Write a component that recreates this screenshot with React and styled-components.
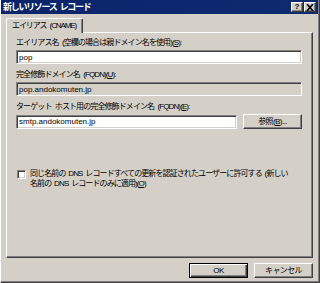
import React from "react";
import styled, { createGlobalStyle } from "styled-components";

const GlobalStyle = createGlobalStyle`
  html, body {
    margin: 0;
    padding: 0;
    background: #d4d0c8;
  }
  body {
    font-family: "Liberation Sans", "Noto Sans CJK JP", sans-serif;
    font-size: 8px;
    color: #000;
  }
`;

export default function App() {
  return (
    <>
      <GlobalStyle />
      <Window>
        <TitleBar>
          <Title>新しいリソース レコード</Title>
          <CaptionButtons>
            <CaptionButton>?</CaptionButton>
            <CaptionButton>
              <svg width="8" height="7" viewBox="0 0 8 7">
                <path d="M1 0 L7 7 M7 0 L1 7" stroke="#000" strokeWidth="1.6" />
              </svg>
            </CaptionButton>
          </CaptionButtons>
        </TitleBar>

        <Body>
          <TabRow>
            <Tab>エイリアス (CNAME)</Tab>
          </TabRow>
          <Panel>
            <Label>
              エイリアス名 (空欄の場合は親ドメイン名を使用)(<u>S</u>):
            </Label>
            <TextBox defaultValue="pop" />

            <Label $top={6}>
              完全修飾ドメイン名 (FQDN)(<u>U</u>):
            </Label>
            <TextBox value="pop.andokomuten.jp" readOnly disabled $disabled />

            <Label $top={6}>
              ターゲット ホスト用の完全修飾ドメイン名 (FQDN)(<u>E</u>):
            </Label>
            <Row>
              <TextBox defaultValue="smtp.andokomuten.jp" />
              <Button $width={59}>
                参照(<u>B</u>)...
              </Button>
            </Row>

            <CheckRow>
              <CheckBox />
              <CheckText>
                同じ名前の DNS レコードすべての更新を認証されたユーザーに許可する (新しい
                <br />
                名前の DNS レコードのみに適用)(<u>O</u>)
              </CheckText>
            </CheckRow>
          </Panel>

          <Footer>
            <Button $width={59} $default>
              OK
            </Button>
            <Button $width={59}>キャンセル</Button>
          </Footer>
        </Body>
      </Window>
    </>
  );
}

const Window = styled.div`
  width: 320px;
  height: 283px;
  box-sizing: border-box;
  background: #d4d0c8;
  border-left: 1px solid #ffffff;
  border-right: 1px solid #404040;
  border-bottom: 1px solid #404040;
  box-shadow: inset -1px -1px 0 #808080;
  display: flex;
  flex-direction: column;
  overflow: hidden;
`;

const TitleBar = styled.div`
  height: 14px;
  margin-right: 1px;
  background: linear-gradient(90deg, #0a246a 0%, #0f2b70 100%);
  display: flex;
  align-items: center;
  justify-content: space-between;
  padding: 0 2px 0 2px;
`;

const Title = styled.div`
  color: #fff;
  font-weight: bold;
  font-size: 9px;
  letter-spacing: -1.3px;
  word-spacing: 2px;
  line-height: 14px;
`;

const CaptionButtons = styled.div`
  display: flex;
  gap: 1px;
`;

const CaptionButton = styled.div`
  width: 12px;
  height: 10px;
  box-sizing: border-box;
  background: #d4d0c8;
  border: 1px solid;
  border-color: #ffffff #404040 #404040 #ffffff;
  box-shadow: inset -1px -1px 0 #808080;
  display: flex;
  align-items: center;
  justify-content: center;
  font-weight: bold;
  font-size: 8px;
  line-height: 8px;
`;

const Body = styled.div`
  padding: 4px 5px 0 5px;
  display: flex;
  flex-direction: column;
`;

const TabRow = styled.div`
  display: flex;
`;

const Tab = styled.div`
  position: relative;
  z-index: 1;
  height: 15px;
  box-sizing: border-box;
  width: 77px;
  margin-bottom: -1px;
  padding-left: 5px;
  background: #d4d0c8;
  border: 1px solid;
  border-color: #ffffff #404040 transparent #ffffff;
  border-bottom: none;
  border-radius: 2px 2px 0 0;
  box-shadow: inset -1px 0 0 #808080;
  line-height: 13px;
  letter-spacing: -1.1px;
  word-spacing: 2px;
  white-space: nowrap;
`;

const Panel = styled.div`
  width: 307px;
  height: 226px;
  box-sizing: border-box;
  border: 1px solid;
  border-color: #ffffff #404040 #404040 #ffffff;
  box-shadow: inset -1px -1px 0 #808080;
  padding: 5px 10px 0 9px;
  display: flex;
  flex-direction: column;
`;

const Label = styled.div`
  line-height: 10px;
  height: 10px;
  margin-top: ${(p) => p.$top || 0}px;
  margin-bottom: 2px;
  letter-spacing: -0.9px;
  word-spacing: 2px;
  white-space: nowrap;
`;

const TextBox = styled.input`
  display: block;
  width: 100%;
  height: 14px;
  box-sizing: border-box;
  margin: 0;
  padding: 0 2px;
  font: inherit;
  font-size: 8px;
  color: #000;
  background: ${(p) => (p.$disabled ? "#d4d0c8" : "#ffffff")};
  border: 1px solid;
  border-color: #808080 #ffffff #ffffff #808080;
  box-shadow: inset 1px 1px 0 #404040, inset -1px -1px 0 #d4d0c8;
  outline: none;
  -webkit-text-fill-color: #000;
  opacity: 1;
`;

const Row = styled.div`
  display: flex;
  align-items: center;
  gap: 6px;
`;

const Button = styled.div`
  flex: none;
  width: ${(p) => p.$width}px;
  height: 15px;
  box-sizing: border-box;
  background: #d4d0c8;
  border: 1px solid;
  border-color: ${(p) =>
    p.$default ? "#000000" : "#ffffff #404040 #404040 #ffffff"};
  box-shadow: ${(p) =>
    p.$default
      ? "inset 1px 1px 0 #ffffff, inset -1px -1px 0 #404040, inset -2px -2px 0 #808080"
      : "inset -1px -1px 0 #808080"};
  display: flex;
  align-items: center;
  justify-content: center;
  letter-spacing: -0.6px;
  line-height: 12px;
`;

const CheckRow = styled.div`
  display: flex;
  align-items: flex-start;
  gap: 4px;
  margin-top: 40px;
  padding-left: 1px;
`;

const CheckBox = styled.div`
  flex: none;
  width: 9px;
  height: 9px;
  margin-top: 1px;
  box-sizing: border-box;
  background: #ffffff;
  border: 1px solid;
  border-color: #808080 #ffffff #ffffff #808080;
  box-shadow: inset 1px 1px 0 #404040, inset -1px -1px 0 #d4d0c8;
`;

const CheckText = styled.div`
  line-height: 9.5px;
  letter-spacing: -0.9px;
  word-spacing: 1.5px;
  white-space: nowrap;
`;

const Footer = styled.div`
  display: flex;
  justify-content: flex-end;
  gap: 6px;
  padding-top: 5px;
  padding-right: 1px;
`;
